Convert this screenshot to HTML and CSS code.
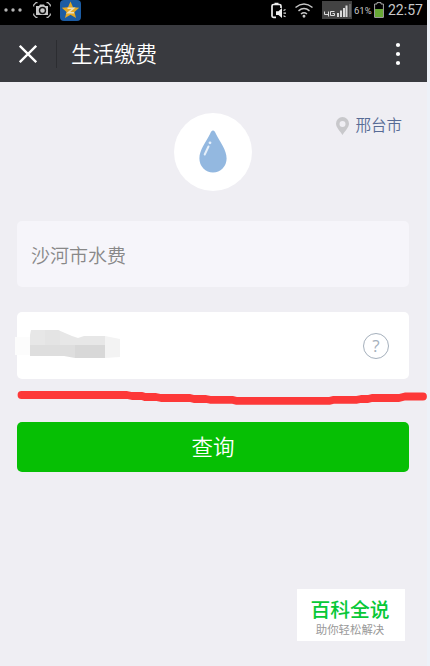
FILE: index.html
```
<!DOCTYPE html>
<html lang="zh-CN">
<head>
	<meta charset="UTF-8">
	<title>生活缴费</title>
	<link rel="stylesheet" href="styles.css">
</head>
<body>
	<div class="phone">
		<div class="status">
			<svg class="dots" width="20" height="20" viewBox="0 0 20 20" fill="#B4B4B4">
				<circle cx="2" cy="10" r="1.700"/><circle cx="9" cy="10" r="1.700"/><circle cx="16" cy="10" r="1.700"/>
			</svg>
			<svg class="camera" width="18" height="16" viewBox="0 0 18 16">
				<path d="M4.500 .7H3L.7 3v1.500M13.500 .7H15L17.300 3v1.500M.7 11.500V13L3 15.300h1.500M17.300 11.500V13L15 15.300h-1.500" fill="none" stroke="#BDBDBD" stroke-width="1.200"/>
				<path d="M3 4h3l1-1.500h4L12 4h3v9H3z" fill="#C8C8C8"/>
				<circle cx="9.500" cy="8.500" r="3" fill="#C8C8C8" stroke="#111" stroke-width="1.400"/>
			</svg>
			<svg class="star" width="21" height="21" viewBox="0 0 21 21">
				<rect width="21" height="21" rx="4" fill="#1C5CA3"/>
				<path d="M10.500 1.500l2.500 5.700 6.200.6-4.700 4.100 1.500 6.100-5.500-3.200L5 18l1.500-6.100-4.700-4.100 6.200-.6z" fill="#E5A823"/>
				<path d="M7.500 8.300h6l-5.500 4.500h6" fill="none" stroke="#E8E0C0" stroke-width="1.500"/>
			</svg>
			<svg class="mute" width="16" height="17" viewBox="0 0 16 17">
				<path d="M5 15.300H2.500Q1 15.300 1 14V4q0-1.500 1.500-1.500h6Q10 2.500 10 4v2M3.500 1.500h4" fill="none" stroke="#EEE" stroke-width="1.700"/>
				<path d="M5 9.200h2.500L11 6v10l-3.500-3H5z" fill="#EEE"/>
				<path d="M12.500 8.500l2-1M12.500 11.200H15M12.500 13.700l2 1" stroke="#DDD" stroke-width="1.200"/>
			</svg>
			<svg class="wifi" width="18" height="15" viewBox="0 0 18 15" fill="none" stroke="#C8C8C8" stroke-width="1.500">
				<path d="M.5 4.500q8.500-7 17 0M3.500 7.800q5.500-4.500 11 0M6 11q3-2.500 6 0"/>
				<circle cx="9" cy="13.200" r=".7" fill="#C8C8C8"/>
			</svg>
			<svg class="signal" width="30" height="18" viewBox="0 0 30 18">
				<rect width="30" height="18" fill="#434343"/>
				<path d="M2.500 10.500v3h4M6.500 10.500v5M12.500 10.500h-4v4h4v-2h-2" fill="none" stroke="#DDD"/>
				<path d="M15 12h2v4h-2zM18 9.500h2V16h-2zM21 7h2v9h-2zM23.500 4.500h2V16h-2z" fill="#D8D8D8"/>
				<path d="M27 3h2v13h-2z" fill="#666"/>
			</svg>
			<span class="percent">61%</span>
			<svg class="battery" width="10" height="16" viewBox="0 0 10 16">
				<path d="M3 2V.6h4V2h2.400v13.400H.6V2z" fill="none" stroke="#AAA"/>
				<path d="M1 7h8v8H1z" fill="#68A936"/>
			</svg>
			<span class="time">22:57</span>
		</div>
		<header>
			<svg class="close" width="18" height="18" viewBox="0 0 18 18">
				<path d="M.8.8l16.400 16.400M17.200.8L.8 17.200" stroke="#FFF" stroke-width="2.300"/>
			</svg>
			<h3>生活缴费</h3>
			<svg class="more" width="6" height="24" viewBox="0 0 6 24" fill="#FFF">
				<circle cx="3" cy="3" r="2.100"/><circle cx="3" cy="12" r="2.100"/><circle cx="3" cy="21" r="2.100"/>
			</svg>
		</header>
		<div class="main">
			<div class="top">
				<div class="logo">
					<svg width="28" height="44" viewBox="0 0 28 44">
						<path d="M14 .5C15.500.5 16 2 17 4c4 8 10.600 16 10.600 24.500a13.600 14 0 0 1-27.200 0C.4 20 7 12 11 4c1-2 1.500-3.500 3-3.500z" fill="#93B8E0"/>
						<path d="M9.500 16.500L5.700 24.500" stroke="#E6F0FA" stroke-width="2" stroke-linecap="round"/>
						<circle cx="11" cy="12.800" r="1.400" fill="#E6F0FA"/>
					</svg>
				</div>
				<div class="city">
					<svg width="13" height="18" viewBox="0 0 13 18">
						<path d="M6.500 0A6.500 6.500 0 0 1 13 6.500C13 10.500 9 14 6.500 18 4 14 0 10.500 0 6.500A6.500 6.500 0 0 1 6.500 0zm0 4a3 3 0 1 0 0 6 3 3 0 0 0 0-6z" fill="#C8C8CB"/>
					</svg>
					<span>邢台市</span>
				</div>
			</div>
			<div class="field company">沙河市水费</div>
			<div class="field account">
				<svg class="mosaic" width="105" height="28" viewBox="0 0 105 28">
					<path d="M0 7h15v18H0z" fill="#FCFCFC"/>
					<path d="M15 15V5l1-5h27l14 6 6 2 6-2h21v9z" fill="#E7E7E7"/>
					<path d="M15 15h75v13H60l-11-2H15z" fill="#DEDEDE"/>
					<path d="M30 0h13l2 1v14H30z" fill="#E4E4E4"/>
					<path d="M60 15h30v13H60z" fill="#D8D8D8"/>
					<path d="M90 6l15 3v18l-15 1z" fill="#F3F3F3"/>
				</svg>
				<span class="help">?</span>
			</div>
			<div class="btn">查询</div>
			<div class="brand">
				<div class="brand-name">百科全说</div>
				<div class="brand-brief">助你轻松解决</div>
			</div>
		</div>
		<svg class="marker" width="412" height="18" viewBox="0 0 412 18">
			<path d="M5.500 6H111L116 7H126L129 8H140L145 9H174L178 10H190L194 10.800H216L220 11.800H314L318 10.800H341L345 10H352L356 9H383L389 7.500H407" fill="none" stroke="#FD3838" stroke-width="7.800" stroke-linecap="round" stroke-linejoin="round"/>
		</svg>
	</div>
</body>
</html>
```
FILE: styles.css
```
body, h3 {
	margin: 0;
	padding: 0;
}

body {
	background-color: #EDF1F8;
	font-family: Roboto, "Noto Sans CJK SC", sans-serif;
}

svg {
	display: block;
	flex: none;
}

.phone {
	width: 427px;
	height: 666px;
	position: relative;
	background-color: #EFEEF3;
}

/*状态栏*/
.status {
	height: 25px;
	padding: 0 5px 5px 4px;
	box-sizing: border-box;
	display: flex;
	align-items: center;
	background-color: #000;
	color: #C8C8C8;
	white-space: nowrap;
}

.camera {
	margin-left: 9px;
}

.star {
	margin-left: 9px;
}

.mute {
	margin-left: auto;
}

.wifi {
	margin-left: 8px;
}

.signal {
	margin-left: 9px;
}

.percent {
	width: 18px;
	margin-left: 2px;
	font-size: 9.500px;
}

.battery {
	margin-left: 2px;
}

.time {
	width: 34px;
	margin-left: 4px;
	font-size: 14px;
}

/*标题栏*/
header {
	height: 57px;
	padding: 0 26px 0 19px;
	box-sizing: border-box;
	display: flex;
	align-items: center;
	background-color: #393A3F;
	color: #FFF;
}

header h3 {
	height: 28px;
	margin-left: 19px;
	padding-left: 14px;
	border-left: 1px solid #2C2D31;
	line-height: 30px;
	font-weight: 350;
	font-size: 21.500px;
}

.more {
	margin-left: auto;
}

.main {
	padding: 31px 18px 0 17px;
}

.top {
	height: 108px;
	display: grid;
	grid-template-columns: 1fr 78px 1fr;
}

.logo {
	width: 78px;
	height: 78px;
	grid-column: 2;
	display: flex;
	align-items: center;
	justify-content: center;
	border-radius: 50%;
	background-color: #FFF;
}

.logo svg {
	margin-right: 1px;
}

.city {
	height: 26px;
	padding-right: 7px;
	display: flex;
	align-items: center;
	justify-content: flex-end;
	gap: 6px;
	line-height: 22px;
	font-weight: 350;
	font-size: 15.500px;
	color: #576B95;
}

.field {
	height: 66px;
	padding: 0 20px 0 14px;
	box-sizing: border-box;
	display: flex;
	align-items: center;
	border-radius: 5px;
	background-color: #FFF;
}

.company {
	font-weight: 350;
	font-size: 19px;
	color: #888;
	background-color: #F6F5FA;
}

/*打码的户号*/
.account {
	height: 67px;
	margin-top: 25px;
}

.mosaic {
	margin: -3px 0 0 -16px;
}

.help {
	width: 26px;
	height: 26px;
	margin-left: auto;
	box-sizing: border-box;
	border: 1px solid #A5B0BC;
	border-radius: 50%;
	line-height: 24px;
	text-align: center;
	font-family: "Open Sans", sans-serif;
	font-size: 17px;
	color: #A5B0BC;
}

.btn {
	height: 50px;
	margin-top: 43px;
	border-radius: 5px;
	line-height: 52px;
	text-align: center;
	font-weight: 350;
	font-size: 21.500px;
	color: #FFF;
	background-color: #06BF04;
}

.brand {
	width: 108px;
	height: 52px;
	margin: 117px 4px 0 auto;
	padding: 9px 2px 0 0;
	box-sizing: border-box;
	text-align: center;
	background-color: #FFF;
}

.brand-name {
	line-height: 26px;
	font-size: 19.800px;
	font-weight: 500;
	color: #07C837;
}

.brand-brief {
	line-height: 12px;
	font-size: 11.400px;
	color: #999;
}

/*手画的红线*/
.marker {
	position: absolute;
	top: 389px;
	left: 16px;
}
```
